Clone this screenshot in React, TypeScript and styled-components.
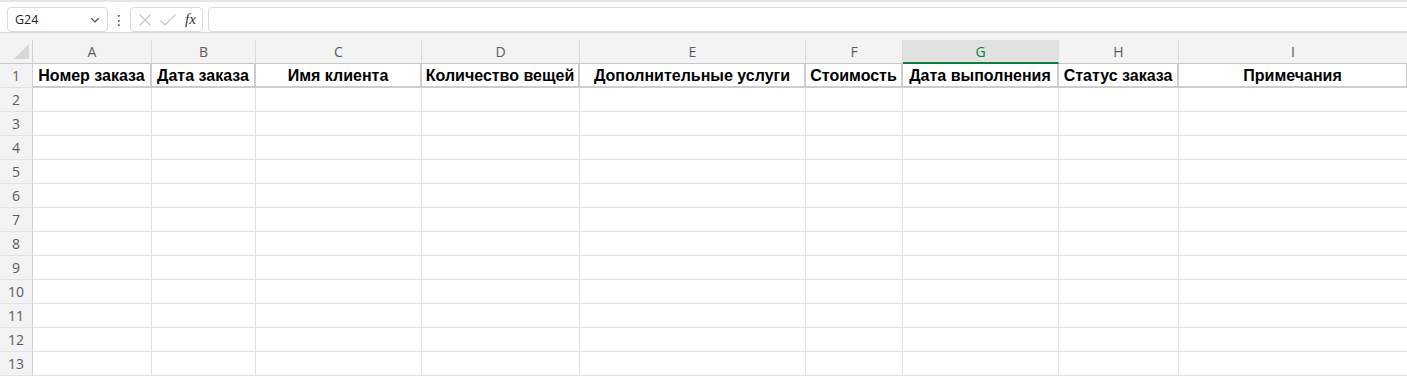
import React from "react";
import styled, { createGlobalStyle, css } from "styled-components";

const GlobalStyle = createGlobalStyle`
  html, body { margin: 0; padding: 0; background: #ffffff; overflow: hidden; }
  * { box-sizing: border-box; }
`;

const COLS = [
  { letter: "A", width: 119, title: "Номер заказа" },
  { letter: "B", width: 104, title: "Дата заказа" },
  { letter: "C", width: 166, title: "Имя клиента" },
  { letter: "D", width: 158, title: "Количество вещей" },
  { letter: "E", width: 226, title: "Дополнительные услуги" },
  { letter: "F", width: 97, title: "Стоимость" },
  { letter: "G", width: 156, title: "Дата выполнения" },
  { letter: "H", width: 120, title: "Статус заказа" },
  { letter: "I", width: 229, title: "Примечания" },
];
const SELECTED = "G";
const ROW_COUNT = 13;

const Page = styled.div`
  width: 1407px;
  height: 377px;
  overflow: hidden;
  background: #ffffff;
`;

const TopStrip = styled.div`
  height: 2px;
  background: #e6e6e6;
`;

const FormulaBar = styled.div`
  height: 31px;
  display: flex;
  align-items: flex-start;
  padding: 5px 0 0 7px;
  border-bottom: 1px solid #d6d6d6;
  background: #ffffff;
`;

const Box = styled.div`
  height: 25px;
  border: 1px solid #dadada;
  border-radius: 4px;
  background: #ffffff;
  display: flex;
  align-items: center;
`;

const NameBox = styled(Box)`
  width: 101px;
  padding: 0 6px 0 7px;
  justify-content: space-between;
  font-family: "Open Sans", "Noto Sans", sans-serif;
  font-size: 12.5px;
  color: #222;
`;

const Dots = styled.div`
  width: 22px;
  height: 25px;
  display: flex;
  align-items: center;
  justify-content: center;
  font-family: "DejaVu Sans", sans-serif;
  font-size: 14px;
  color: #444;
`;

const FxBox = styled(Box)`
  width: 73px;
  padding: 0 6px 0 6px;
  gap: 6px;
`;

const Fx = styled.span`
  font-family: "Liberation Serif", "DejaVu Serif", serif;
  font-style: italic;
  font-size: 15px;
  color: #333;
  margin-left: 2px;
`;

const FormulaInput = styled(Box)`
  flex: 1;
  margin-left: 5px;
  margin-right: -10px;
`;

const HeaderGap = styled.div`
  height: 7px;
  background: #f3f3f3;
`;

const Grid = styled.div`
  display: grid;
  grid-template-columns: 33px ${COLS.map((c) => `${c.width}px`).join(" ")};
  grid-auto-rows: 24px;
`;

const Corner = styled.div`
  position: relative;
  background: #f3f3f3;
  border-right: 1px solid #d0d0d0;
  border-bottom: 1px solid #c8c8c8;
`;

const CornerTriangle = styled.div`
  position: absolute;
  right: 3px;
  bottom: 4px;
  width: 0;
  height: 0;
  border-left: 15px solid transparent;
  border-bottom: 15px solid #d7d7d7;
`;

const ColHeader = styled.div<{ $selected?: boolean }>`
  background: ${(p) => (p.$selected ? "#e1e1e1" : "#f3f3f3")};
  border-right: 1px solid #dcdcdc;
  border-bottom: 1px solid #c8c8c8;
  display: flex;
  align-items: center;
  justify-content: center;
  font-family: "Open Sans", "Noto Sans", sans-serif;
  font-size: 14px;
  color: #5c5c5c;
  ${(p) =>
    p.$selected &&
    css`
      color: #107c41;
      border-bottom: 2px solid #107c41;
      padding-top: 1px;
    `}
`;

const RowHeader = styled.div`
  background: #f3f3f3;
  border-right: 1px solid #d0d0d0;
  border-bottom: 1px solid #e1e1e1;
  display: flex;
  align-items: center;
  justify-content: center;
  font-family: "Open Sans", "Noto Sans", sans-serif;
  font-size: 14px;
  color: #5c5c5c;
`;

const Cell = styled.div<{ $title?: boolean }>`
  border-right: 1px solid #e1e1e1;
  border-bottom: 1px solid #e1e1e1;
  ${(p) =>
    p.$title &&
    css`
      border-right: 2px solid #cdcdcd;
      border-bottom: 2px solid #cdcdcd;
      display: flex;
      align-items: center;
      justify-content: center;
      font-family: "Liberation Sans", Arial, sans-serif;
      font-weight: 700;
      font-size: 16px;
      color: #000;
      white-space: nowrap;
      overflow: hidden;
      padding-top: 1px;
    `}
`;

const Chevron = () => (
  <svg width="12" height="12" viewBox="0 0 12 12" fill="none">
    <path d="M2.5 4.5 L6 8 L9.5 4.5" stroke="#555" strokeWidth="1.2" strokeLinecap="round" strokeLinejoin="round" />
  </svg>
);

const CrossIcon = () => (
  <svg width="16" height="16" viewBox="0 0 16 16" fill="none">
    <path d="M2.5 2.5 L13.5 13.5 M13.5 2.5 L2.5 13.5" stroke="#c4c4c4" strokeWidth="1.1" />
  </svg>
);

const CheckIcon = () => (
  <svg width="18" height="16" viewBox="0 0 18 16" fill="none">
    <path d="M1.5 8.5 L6 13 L16.5 2.5" stroke="#c4c4c4" strokeWidth="1.1" />
  </svg>
);

export default function App() {
  const rows = Array.from({ length: ROW_COUNT }, (_, i) => i + 1);
  return (
    <Page>
      <GlobalStyle />
      <TopStrip />
      <FormulaBar>
        <NameBox>
          <span>G24</span>
          <Chevron />
        </NameBox>
        <Dots>⋮</Dots>
        <FxBox>
          <CrossIcon />
          <CheckIcon />
          <Fx>fx</Fx>
        </FxBox>
        <FormulaInput />
      </FormulaBar>
      <HeaderGap />
      <Grid>
        <Corner>
          <CornerTriangle />
        </Corner>
        {COLS.map((c) => (
          <ColHeader key={c.letter} $selected={c.letter === SELECTED}>
            {c.letter}
          </ColHeader>
        ))}
        {rows.map((r) => (
          <React.Fragment key={r}>
            <RowHeader>{r}</RowHeader>
            {COLS.map((c) => (
              <Cell key={c.letter} $title={r === 1}>
                {r === 1 ? c.title : null}
              </Cell>
            ))}
          </React.Fragment>
        ))}
      </Grid>
    </Page>
  );
}
